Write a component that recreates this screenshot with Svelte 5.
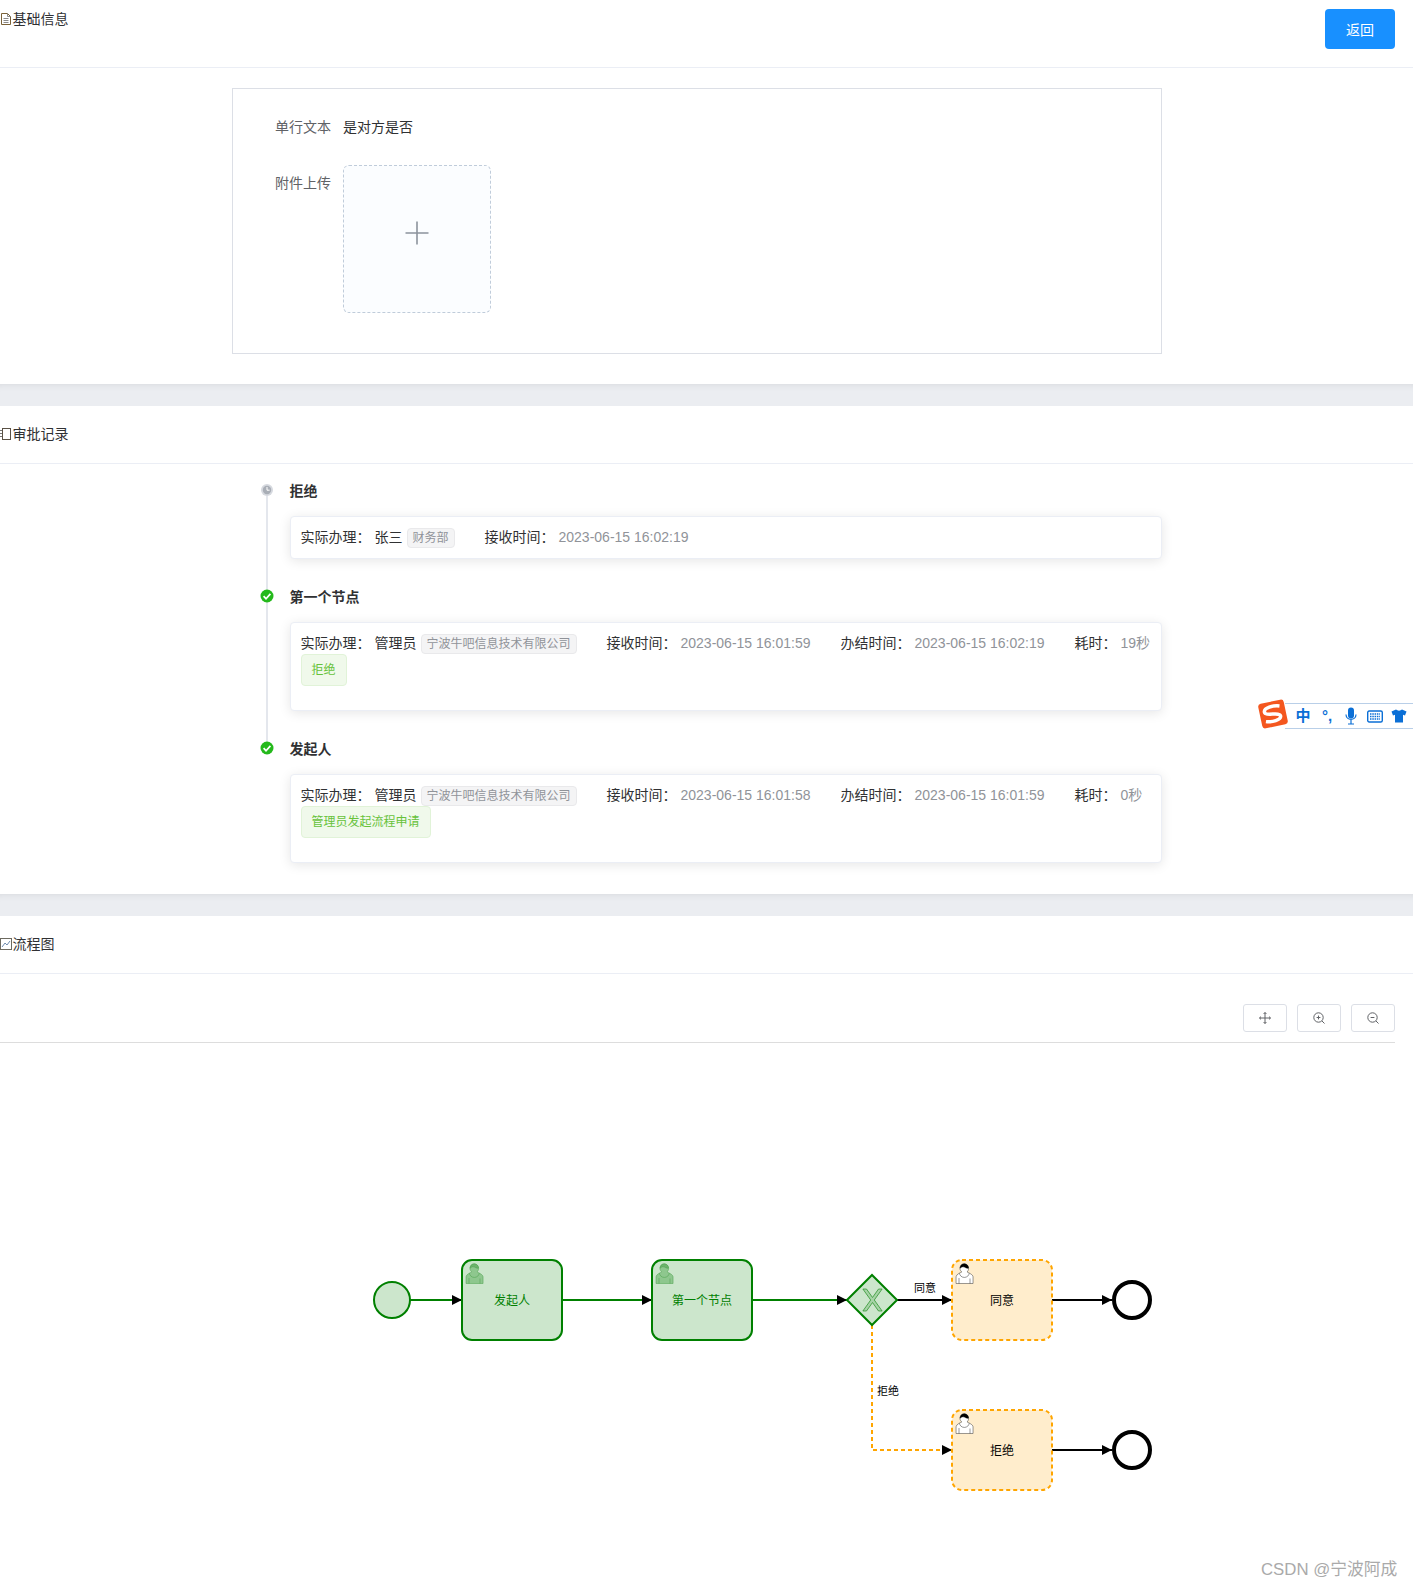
<script>
  const userPath1 = "m 15,12 c 0.909,-0.845 1.594,-2.049 1.594,-3.385 0,-2.554 -1.805,-4.622 -4.357,-4.622 -2.552,0 -4.288,2.068 -4.288,4.622 0,1.348 0.974,2.562 1.896,3.405 -0.529,0.187 -5.669,2.097 -5.794,4.756 v 6.718 h 17 v -6.718 c 0,-2.298 -5.528,-4.595 -6.051,-4.776 z m -8,6 l 0,5.5 m 11,0 l 0,-5";
  const userPath2 = "m 15,12 m 2.162,1.009 c 0,2.447 -2.158,4.431 -4.821,4.431 -2.665,0 -4.822,-1.981 -4.822,-4.431";
  const userPath3 = "m 15,12 m -6.9,-3.8 c 0,0 2.251,-2.358 4.274,-1.177 2.024,1.181 4.221,1.537 4.124,0.965 -0.098,-0.57 -0.117,-3.791 -4.191,-4.136 -3.575,0.001 -4.208,3.367 -4.207,4.348 z";

  const tasks = [
    { x: 462, y: 1260, label: "发起人", kind: "done" },
    { x: 652, y: 1260, label: "第一个节点", kind: "done" },
    { x: 952, y: 1260, label: "同意", kind: "todo" },
    { x: 952, y: 1410, label: "拒绝", kind: "todo" }
  ];

  const records = [
    {
      title: "拒绝", state: "wait", name: "张三", dept: "财务部",
      received: "2023-06-15 16:02:19"
    },
    {
      title: "第一个节点", state: "ok", name: "管理员", dept: "宁波牛吧信息技术有限公司",
      received: "2023-06-15 16:01:59", finished: "2023-06-15 16:02:19", cost: "19秒", note: "拒绝"
    },
    {
      title: "发起人", state: "ok", name: "管理员", dept: "宁波牛吧信息技术有限公司",
      received: "2023-06-15 16:01:58", finished: "2023-06-15 16:01:59", cost: "0秒", note: "管理员发起流程申请"
    }
  ];
</script>

<div class="page">
  <section class="panel">
    <header class="head head-top">
      <div class="title">
        <svg class="ticon" viewBox="0 0 12 14" width="12" height="14">
          <path d="M1.500 1.500h6l3 3v8h-9z" fill="none" stroke="#7a6238" stroke-width="1" />
          <path d="M7.500 1.500v3h3M3.500 6.500h5M3.500 8.500h5M3.500 10.500h5" fill="none" stroke="#8a8a8a" stroke-width="1" />
        </svg>
        <span>基础信息</span>
      </div>
      <button class="back">返回</button>
    </header>
    <div class="form-wrap">
      <div class="form">
        <div class="frow">
          <span class="flabel">单行文本</span>
          <span class="fvalue">是对方是否</span>
        </div>
        <div class="frow frow-up">
          <span class="flabel flabel-up">附件上传</span>
          <div class="upload">
            <svg viewBox="0 0 24 24" width="24" height="24">
              <path d="M12 0.500v23M0.500 12h23" stroke="#8c939d" stroke-width="1.6" fill="none" />
            </svg>
          </div>
        </div>
      </div>
    </div>
  </section>

  <div class="band"></div>

  <section class="panel">
    <header class="head">
      <div class="title">
        <svg class="ticon" viewBox="0 0 12 14" width="12" height="14">
          <path d="M0 3.500h3M0 6.500h3M0 9.500h3" stroke="#777" stroke-width="1" fill="none" />
          <rect x="2.500" y="1.500" width="8" height="11" fill="none" stroke="#5a5145" stroke-width="1" />
        </svg>
        <span>审批记录</span>
      </div>
    </header>
    <ul class="timeline">
      {#each records as r, i}
        <li class="item">
          {#if i < records.length - 1}<span class="tail"></span>{/if}
          {#if r.state === "wait"}
            <svg class="node node-wait" viewBox="0 0 12 12" width="12" height="12">
              <circle cx="6" cy="6" r="6" fill="#d6d9df" />
              <circle cx="6" cy="6" r="4.200" fill="#a9aeb6" />
              <path d="M6 3v3.200h2.600" fill="none" stroke="#fff" stroke-width="1" />
            </svg>
          {:else}
            <svg class="node node-ok" viewBox="0 0 14 14" width="14" height="14">
              <circle cx="7" cy="7" r="6.500" fill="#24b91b" />
              <path d="M3.600 7.200l2.400 2.500 4.400-4.800" fill="none" stroke="#fff" stroke-width="1.700" />
            </svg>
          {/if}
          <div class="rtitle">{r.title}</div>
          <div class="rcard">
            <div class="rrow">
              <div class="field">
                <span class="k">实际办理：</span>
                <span class="who">{r.name}</span>
                <span class="tag tag-mini">{r.dept}</span>
              </div>
              <div class="field">
                <span class="k">接收时间：</span>
                <span class="v">{r.received}</span>
              </div>
              {#if r.finished}
                <div class="field">
                  <span class="k">办结时间：</span>
                  <span class="v">{r.finished}</span>
                </div>
                <div class="field">
                  <span class="k">耗时：</span>
                  <span class="v">{r.cost}</span>
                </div>
              {/if}
            </div>
            {#if r.note}
              <div class="note-row"><span class="tag tag-note">{r.note}</span></div>
            {/if}
          </div>
        </li>
      {/each}
    </ul>
  </section>

  <div class="band"></div>

  <section class="panel">
    <header class="head">
      <div class="title">
        <svg class="ticon" viewBox="0 0 12 14" width="12" height="14">
          <rect x="0.500" y="1.500" width="11" height="11" fill="none" stroke="#6d6a60" stroke-width="1" />
          <path d="M2 10l3-4 2 2 3-4" fill="none" stroke="#6f8cb0" stroke-width="1" />
        </svg>
        <span>流程图</span>
      </div>
    </header>
    <div class="toolbar">
      <button class="tool" aria-label="移动">
        <svg viewBox="0 0 12 12" width="12" height="12">
          <path d="M6 0.500v11M0.500 6h11M4.600 2L6 0.500 7.400 2M4.600 10L6 11.500 7.400 10M2 4.600L0.500 6 2 7.400M10 4.600L11.500 6 10 7.400" fill="none" stroke="#606266" stroke-width="1" />
        </svg>
      </button>
      <button class="tool" aria-label="放大">
        <svg viewBox="0 0 12 12" width="12" height="12">
          <circle cx="5.500" cy="5.500" r="4.700" fill="none" stroke="#606266" stroke-width="1" />
          <path d="M9 9l2.500 2.500M3.600 5.500h3.800M5.500 3.600v3.800" fill="none" stroke="#606266" stroke-width="1" />
        </svg>
      </button>
      <button class="tool" aria-label="缩小">
        <svg viewBox="0 0 12 12" width="12" height="12">
          <circle cx="5.500" cy="5.500" r="4.700" fill="none" stroke="#606266" stroke-width="1" />
          <path d="M9 9l2.500 2.500M3.600 5.500h3.800" fill="none" stroke="#606266" stroke-width="1" />
        </svg>
      </button>
    </div>
    <svg class="diagram" viewBox="0 1043 1395 545" width="1395" height="545">
      <defs>
        <marker id="arrow" viewBox="0 0 20 20" refX="20" refY="10" markerWidth="10" markerHeight="10" markerUnits="userSpaceOnUse" orient="auto">
          <path d="M0 0L20 10L0 20z" fill="#000" />
        </marker>
      </defs>

      <circle cx="392" cy="1300" r="18" fill="#cce6cc" stroke="#008000" stroke-width="2" />

      <path d="M410 1300H462" class="edge green" marker-end="url(#arrow)" />
      <path d="M562 1300H652" class="edge green" marker-end="url(#arrow)" />
      <path d="M752 1300H847" class="edge green" marker-end="url(#arrow)" />
      <path d="M897 1300H952" class="edge black" marker-end="url(#arrow)" />
      <path d="M872 1325V1450H952" class="edge orange" marker-end="url(#arrow)" />
      <path d="M1052 1300H1112" class="edge black" marker-end="url(#arrow)" />
      <path d="M1052 1450H1112" class="edge black" marker-end="url(#arrow)" />

      <path d="M847 1300L872 1275L897 1300L872 1325z" fill="#cce6cc" stroke="#008000" stroke-width="2" />
      <path transform="translate(872.500 1300) scale(1.050 1.130) translate(-25.140 -24.700)" d="m 16,15 7.430,9.710 -7.430,9.710 3.430,0 5.710,-7.460 5.710,7.460 3.430,0 -7.430,-9.710 7.430,-9.710 -3.430,0 -5.710,7.460 -5.710,-7.460 -3.430,0 z" fill="#a6d3a6" stroke="#2a932a" stroke-width="0.700" />

      {#each tasks as t}
        <g transform="translate({t.x} {t.y})">
          <rect width="100" height="80" rx="10" ry="10" class={t.kind} />
          <g class={"user user-" + t.kind}>
            <path d={userPath1} class="u-body" />
            <path d={userPath2} class="u-body" />
            <path d={userPath3} class="u-hair" />
          </g>
          <text x="50" y="45" class={"tlabel tlabel-" + t.kind}>{t.label}</text>
        </g>
      {/each}

      <circle cx="1132" cy="1300" r="18" fill="#fff" stroke="#000" stroke-width="4" />
      <circle cx="1132" cy="1450" r="18" fill="#fff" stroke="#000" stroke-width="4" />

      <text x="925" y="1292" class="elabel">同意</text>
      <text x="888" y="1395" class="elabel">拒绝</text>
    </svg>
  </section>

  <div class="ime">
    <svg class="ime-logo" viewBox="0 0 32 32" width="32" height="32">
      <rect x="3" y="3.500" width="26" height="25" rx="3" transform="rotate(-12 16 16)" fill="#f4571f" />
      <path d="M24 9.500C18 7.500 8 8 8 12.500c0 4.500 15 2.500 15 7 0 4-10 4.500-15.500 2.500" transform="rotate(-12 16 16)" fill="none" stroke="#fff" stroke-width="3.500" />
    </svg>
    <span class="ime-cell ime-zh">中</span>
    <span class="ime-cell ime-p">°,</span>
    <span class="ime-cell">
      <svg viewBox="0 0 12 18" width="12" height="18">
        <rect x="3" y="0.500" width="6" height="11" rx="3" fill="#0b6fd6" />
        <path d="M1 7.500c0 6.500 10 6.500 10 0M6 13v4M3 17h6" fill="none" stroke="#0b6fd6" stroke-width="1.200" />
      </svg>
    </span>
    <span class="ime-cell">
      <svg viewBox="0 0 16 13" width="16" height="13">
        <rect x="0.700" y="1" width="14.600" height="11" rx="1.500" fill="none" stroke="#0b6fd6" stroke-width="1.400" />
        <path d="M3 4h10M3 6.500h10M3 9h10" stroke="#0b6fd6" stroke-width="1.400" stroke-dasharray="1.500 0.800" fill="none" />
      </svg>
    </span>
    <span class="ime-cell">
      <svg viewBox="0 0 16 14" width="16" height="14">
        <path d="M5 0.500c1.500 1.500 4.500 1.500 6 0l4.500 2-1.500 4-2-0.700v7.700h-8v-7.700l-2 0.700-1.500-4z" fill="#0b6fd6" />
      </svg>
    </span>
  </div>

  <div class="mark">CSDN @宁波阿成</div>
</div>

<style>
  :global(body) {
    margin: 0;
    background: #fff;
  }

  .page {
    position: relative;
    width: 1413px;
    height: 1588px;
    overflow: hidden;
    font-family: "Liberation Sans", "Noto Sans CJK SC", sans-serif;
    font-size: 14px;
    color: #303133;
  }

  .panel {
    background: #fff;
  }

  .head {
    display: flex;
    justify-content: space-between;
    align-items: center;
    box-sizing: border-box;
    height: 58px;
    padding-right: 18px;
    padding-bottom: 2px;
    border-bottom: 1px solid #ebeef5;
  }

  .head-top {
    height: 68px;
    align-items: flex-start;
    padding-top: 9px;
    padding-bottom: 0;
  }

  .title {
    display: flex;
    align-items: center;
    height: 20px;
    line-height: 20px;
    color: #303133;
  }

  .ticon {
    display: block;
    flex: none;
    margin-right: 0.5px;
  }

  .back {
    width: 70px;
    height: 40px;
    border: 0;
    border-radius: 4px;
    background: #1890ff;
    color: #fff;
    font: inherit;
    padding: 0;
  }

  .form-wrap {
    padding: 20px 0 30px;
  }

  .form {
    box-sizing: border-box;
    width: 930px;
    margin-left: 232px;
    height: 266px;
    padding: 18px 10px 0;
    border: 1px solid #dcdfe6;
  }

  .frow {
    display: flex;
    height: 40px;
    line-height: 40px;
    margin-bottom: 18px;
  }

  .frow-up {
    height: 148px;
  }

  .flabel {
    box-sizing: border-box;
    width: 100px;
    padding-right: 12px;
    text-align: right;
    color: #606266;
  }

  .flabel-up {
    line-height: 36px;
  }

  .fvalue {
    color: #303133;
  }

  .upload {
    box-sizing: border-box;
    width: 148px;
    height: 148px;
    display: flex;
    align-items: center;
    justify-content: center;
    padding-bottom: 12px;
    border: 1px dashed #c0ccda;
    border-radius: 6px;
    background: #fbfdff;
  }

  .upload svg {
    display: block;
  }

  .band {
    height: 22px;
    background: #ebedf1;
    box-shadow: inset 0 7px 7px -6px rgba(0, 0, 0, 0.08);
  }

  .timeline {
    list-style: none;
    margin: 0;
    padding: 16px 0 4px 261.5px;
    width: 900px;
  }

  .item {
    position: relative;
    padding: 0 0 27px 28px;
  }

  .tail {
    position: absolute;
    left: 4px;
    top: 10px;
    height: 100%;
    border-left: 2px solid #e4e7ed;
  }

  .node {
    position: absolute;
    display: block;
  }

  .node-wait {
    left: -1px;
    top: 4px;
  }

  .node-ok {
    left: -2px;
    top: 3px;
  }

  .rtitle {
    padding-top: 1px;
    height: 20px;
    line-height: 20px;
    font-weight: 700;
    color: #303133;
    margin-bottom: 15px;
  }

  .rcard {
    box-sizing: border-box;
    padding: 10px;
    background: #fff;
    border: 1px solid #ebeef5;
    border-radius: 4px;
    box-shadow: 0 2px 12px 0 rgba(0, 0, 0, 0.1);
  }

  .rrow {
    display: flex;
    height: 21px;
    gap: 30px;
    line-height: 20px;
    white-space: nowrap;
  }

  .field {
    display: flex;
    height: 20px;
    gap: 4px;
    align-items: center;
  }

  .k,
  .who {
    color: #303133;
  }

  .v {
    color: #909399;
  }

  .tag {
    display: inline-block;
    box-sizing: border-box;
    border: 1px solid;
    border-radius: 4px;
    font-size: 12px;
    white-space: nowrap;
  }

  .tag-mini {
    height: 20px;
    line-height: 19px;
    margin-top: 1px;
    padding: 0 5px;
    color: #909399;
    background: #f4f4f5;
    border-color: #e9e9eb;
  }

  .note-row {
    display: flex;
    margin-bottom: 14px;
  }

  .tag-note {
    height: 32px;
    line-height: 30px;
    padding: 0 10px;
    color: #67c23a;
    background: #f0f9eb;
    border-color: #e1f3d8;
  }

  .toolbar {
    display: flex;
    justify-content: flex-end;
    gap: 10px;
    box-sizing: border-box;
    width: 1395px;
    height: 69px;
    padding-top: 30px;
    border-bottom: 1px solid #dddddd;
  }

  .tool {
    display: flex;
    align-items: center;
    justify-content: center;
    width: 44px;
    height: 28px;
    padding: 0;
    background: #fff;
    border: 1px solid #dcdfe6;
    border-radius: 3px;
  }

  .tool svg {
    display: block;
  }

  .diagram {
    display: block;
  }

  .edge {
    fill: none;
    stroke-width: 2;
  }

  .green {
    stroke: #008000;
  }

  .black {
    stroke: #000;
  }

  .orange {
    stroke: #ffa500;
    stroke-dasharray: 4 3;
  }

  .done {
    fill: #cce6cc;
    stroke: #008000;
    stroke-width: 2;
  }

  .todo {
    fill: #ffedcc;
    stroke: #ffa500;
    stroke-width: 2;
    stroke-dasharray: 4 3;
  }

  .u-body,
  .u-hair {
    stroke-width: 0.5;
  }

  .user-done .u-body {
    fill: #8ec78e;
    stroke: #4a9f4a;
  }

  .user-done .u-hair {
    fill: #6cb36c;
    stroke: #4a9f4a;
  }

  .user-todo .u-body {
    fill: #fff;
    stroke: #333;
  }

  .user-todo .u-hair {
    fill: #000;
    stroke: #000;
  }

  .tlabel {
    font-size: 12px;
    text-anchor: middle;
  }

  .tlabel-done {
    fill: #008000;
  }

  .tlabel-todo {
    fill: #000;
  }

  .elabel {
    font-size: 11px;
    text-anchor: middle;
    fill: #000;
  }

  .ime {
    position: absolute;
    left: 1285px;
    top: 703px;
    box-sizing: border-box;
    width: 128px;
    height: 26px;
    display: flex;
    align-items: center;
    padding-left: 6px;
    background: #fff;
    border-top: 1px solid #b9cfe8;
    border-bottom: 1px solid #b9cfe8;
  }

  .ime-logo {
    position: absolute;
    left: -28px;
    top: -6px;
    display: block;
  }

  .ime-cell {
    flex: none;
    display: flex;
    justify-content: center;
    align-items: center;
    width: 24px;
    height: 24px;
    line-height: 24px;
  }

  .ime-cell svg {
    display: block;
  }

  .ime-zh {
    font-size: 15px;
    font-weight: 700;
    color: #0b6fd6;
  }

  .ime-p {
    font-size: 15px;
    font-weight: 700;
    color: #0b6fd6;
  }

  .mark {
    position: absolute;
    left: 1261px;
    top: 1558px;
    line-height: 24px;
    font-size: 16.8px;
    color: #aaaaaa;
    white-space: nowrap;
  }
</style>
